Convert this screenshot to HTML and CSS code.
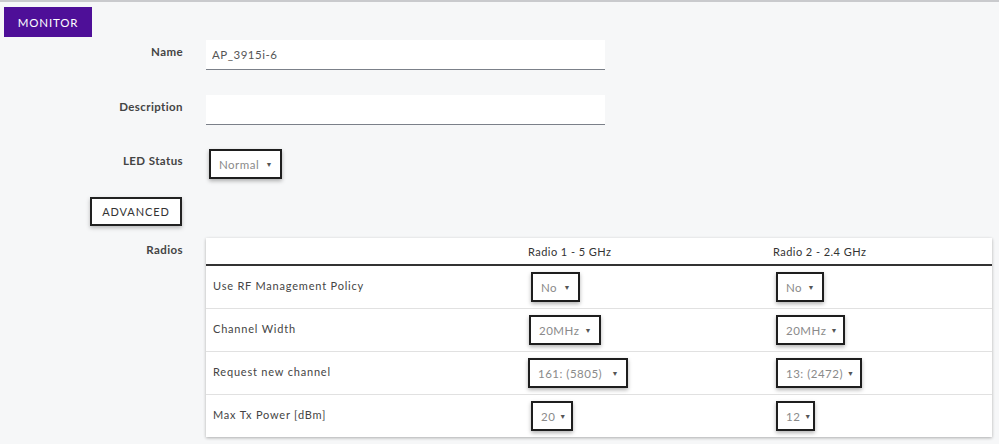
FILE: index.html
```html
<!DOCTYPE html>
<html lang="en">
<head>
    <meta charset="UTF-8">
    <title>AP Configuration</title>
    <link rel="stylesheet" href="styles.css">
</head>
<body>
    <div class="page">
        <button class="monitor-btn">MONITOR</button>

        <div class="form-row row-name">
            <label class="field-label" for="ap-name">Name</label>
            <input class="text-input" id="ap-name" type="text" value="AP_3915i-6">
        </div>

        <div class="form-row row-desc">
            <label class="field-label" for="ap-desc">Description</label>
            <input class="text-input" id="ap-desc" type="text" value="">
        </div>

        <div class="form-row row-led">
            <span class="field-label">LED Status</span>
            <div class="led-wrap">
                <div class="dropdown dd-led"><span>Normal</span><i class="caret">&#9660;</i></div>
            </div>
        </div>

        <div class="form-row row-adv">
            <div class="adv-cell"><button class="advanced-btn">ADVANCED</button></div>
        </div>

        <div class="form-row row-radios">
            <span class="field-label">Radios</span>
            <div class="radios">
                <div class="radios-head">
                    <div class="cell first"></div>
                    <div class="cell">Radio 1 - 5 GHz</div>
                    <div class="cell">Radio 2 - 2.4 GHz</div>
                </div>
                <div class="radios-row">
                    <div class="cell first">Use RF Management Policy</div>
                    <div class="cell r1"><div class="dropdown" style="width: 49px"><span>No</span><i class="caret">&#9660;</i></div></div>
                    <div class="cell r2"><div class="dropdown" style="width: 48px"><span>No</span><i class="caret">&#9660;</i></div></div>
                </div>
                <div class="radios-row">
                    <div class="cell first">Channel Width</div>
                    <div class="cell r1 tight"><div class="dropdown" style="width: 72px"><span>20MHz</span><i class="caret">&#9660;</i></div></div>
                    <div class="cell r2"><div class="dropdown" style="width: 69px"><span>20MHz</span><i class="caret">&#9660;</i></div></div>
                </div>
                <div class="radios-row">
                    <div class="cell first">Request new channel</div>
                    <div class="cell r1 flush"><div class="dropdown" style="width: 100px"><span>161: (5805)</span><i class="caret">&#9660;</i></div></div>
                    <div class="cell r2"><div class="dropdown" style="width: 86px"><span>13: (2472)</span><i class="caret">&#9660;</i></div></div>
                </div>
                <div class="radios-row">
                    <div class="cell first">Max Tx Power [dBm]</div>
                    <div class="cell r1"><div class="dropdown" style="width: 42px"><span>20</span><i class="caret">&#9660;</i></div></div>
                    <div class="cell r2"><div class="dropdown" style="width: 39px"><span>12</span><i class="caret">&#9660;</i></div></div>
                </div>
            </div>
        </div>
    </div>
</body>
</html>
```

FILE: styles.css
```css
body {
    margin: 0;
    padding: 0;
    font-family: 'Lato', 'Liberation Sans', sans-serif;
    background: #f6f7f8;
    color: #333;
    height: 444px;
    overflow: hidden;
}

.page {
    border-top: 2px solid #c9cacd;
    padding: 5px 4px 0 4px;
}

.monitor-btn {
    display: block;
    width: 88px;
    height: 30px;
    border: none;
    background: #4e0f98;
    color: #fff;
    font-family: inherit;
    font-size: 11.5px;
    letter-spacing: 0.8px;
    cursor: pointer;
}

.form-row {
    display: grid;
    grid-template-columns: 179px 400px;
    column-gap: 23px;
}

.row-name { margin-top: 3px; }
.row-desc { margin-top: 25px; }
.row-led { margin-top: 24px; }
.row-adv { margin-top: 18px; }
.row-radios { margin-top: 12px; grid-template-columns: 179px 786px; }

.field-label {
    text-align: right;
    font-size: 11.5px;
    font-weight: bold;
    color: #444;
    letter-spacing: 0.4px;
    padding-top: 5px;
}

.text-input {
    height: 30px;
    box-sizing: border-box;
    width: 399px;
    border: none;
    border-bottom: 1px solid #7b8089;
    background: #fff;
    padding: 0 6px;
    font-family: inherit;
    font-size: 11.5px;
    letter-spacing: 0.5px;
    color: #555;
    outline: none;
}

.led-wrap {
    padding-left: 3px;
}

.dropdown {
    display: inline-flex;
    align-items: center;
    justify-content: space-between;
    box-sizing: border-box;
    height: 30px;
    padding: 0 7px 0 8px;
    background: #fff;
    border: 2px solid #1e1e1e;
    box-shadow: 0 2px 4px rgba(0, 0, 0, 0.3);
    font-size: 11.5px;
    letter-spacing: 0.5px;
    color: #8a8a8a;
    white-space: nowrap;
}

.dd-led {
    width: 73px;
}

.caret {
    font-style: normal;
    font-size: 7px;
    color: #555;
    margin-left: 4px;
}

.adv-cell {
    display: flex;
    justify-content: flex-end;
    padding-right: 1px;
}

.advanced-btn {
    width: 92px;
    height: 29px;
    background: #fff;
    border: 2px solid #222;
    box-shadow: 0 2px 4px rgba(0, 0, 0, 0.25);
    font-family: inherit;
    font-size: 11px;
    letter-spacing: 0.9px;
    color: #333;
    cursor: pointer;
}

.radios {
    background: #fff;
    box-shadow: 0 1px 3px rgba(0, 0, 0, 0.3);
    font-size: 11px;
    letter-spacing: 0.45px;
    color: #444;
}

.radios-head,
.radios-row {
    display: grid;
    grid-template-columns: 322px 245px 1fr;
}

.radios-head {
    height: 26px;
    align-items: center;
    border-bottom: 2px solid #333;
    color: #333;
}

.radios-row {
    height: 42px;
    align-items: center;
    border-bottom: 1px solid #e1e1e1;
}

.radios-row:last-child {
    border-bottom: none;
}

.cell.first {
    padding-left: 7px;
    padding-bottom: 4px;
    letter-spacing: 0.8px;
}

.cell.r1 { padding-left: 3px; }
.cell.r1.tight { padding-left: 1px; }
.cell.r1.flush { padding-left: 0; }
.cell.r2 { padding-left: 3px; }
```
